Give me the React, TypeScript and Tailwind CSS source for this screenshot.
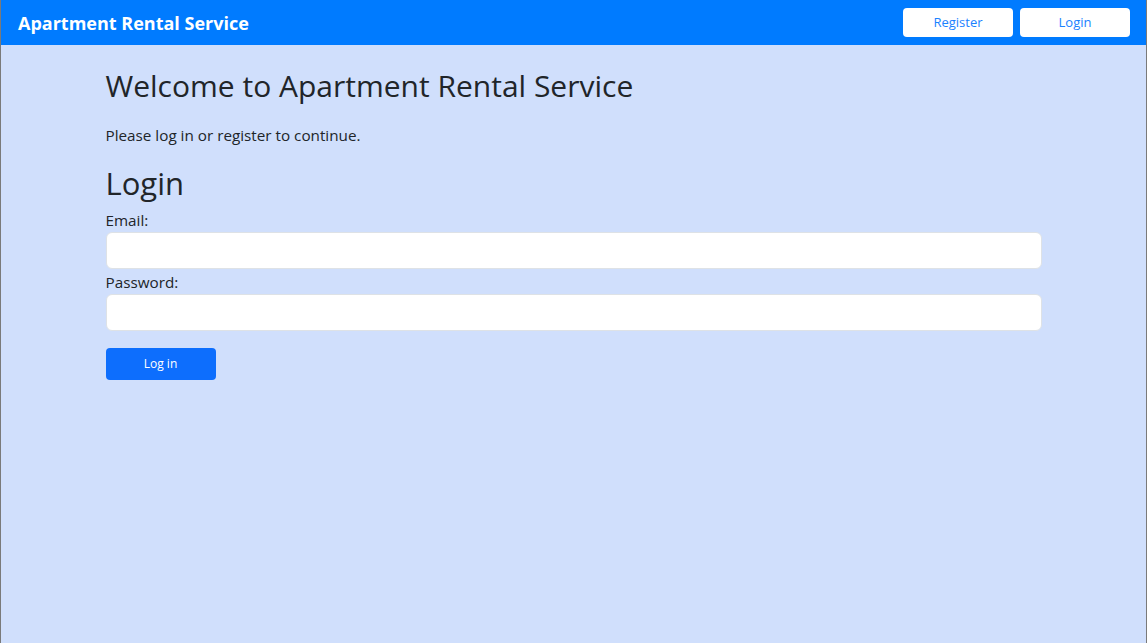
export default function App() {
  return (
    <div
      className="flex min-h-[643px] w-full flex-col border-x border-[#7a7a7a] bg-[#d0dffc] text-[#212529]"
      style={{ fontFamily: '"Open Sans", "Noto Sans", sans-serif' }}
    >
      <nav className="flex h-[45px] items-center justify-between bg-[#007bff] pl-[17px] pr-[16px]">
        <span className="mt-[2px] text-[18px] font-bold text-white">Apartment Rental Service</span>
        <div className="flex gap-[7px]">
          <button className="h-[29px] w-[110px] rounded-[4px] bg-white pt-[1px] text-[13px] text-[#1a82ff]">Register</button>
          <button className="h-[29px] w-[110px] rounded-[4px] bg-white pt-[1px] text-[13px] text-[#1a82ff]">Login</button>
        </div>
      </nav>

      <main className="mx-auto w-[960px] px-3">
        <h2 className="mt-[20px] text-[30px] leading-[42px]">Welcome to Apartment Rental Service</h2>
        <p className="mt-[16px] text-[15.25px] leading-[24px]">Please log in or register to continue.</p>
        <h1 className="mt-[14px] text-[31px] leading-[44px]">Login</h1>
        <form className="mt-[3px] flex flex-col" onSubmit={(e) => e.preventDefault()}>
          <label className="text-[15.25px] leading-[24px]" htmlFor="email">Email:</label>
          <input id="email" type="email" className="h-[37px] w-full rounded-[6px] border border-[#dee2e6] bg-white px-3 outline-none" />
          <label className="mt-[1px] text-[15.25px] leading-[24px]" htmlFor="password">Password:</label>
          <input id="password" type="password" className="h-[37px] w-full rounded-[6px] border border-[#dee2e6] bg-white px-3 outline-none" />
          <button type="submit" className="mt-[17px] h-[32px] w-[110px] rounded-[4px] bg-[#0d6efd] text-[12px] text-white">Log in</button>
        </form>
      </main>
    </div>
  );
}
